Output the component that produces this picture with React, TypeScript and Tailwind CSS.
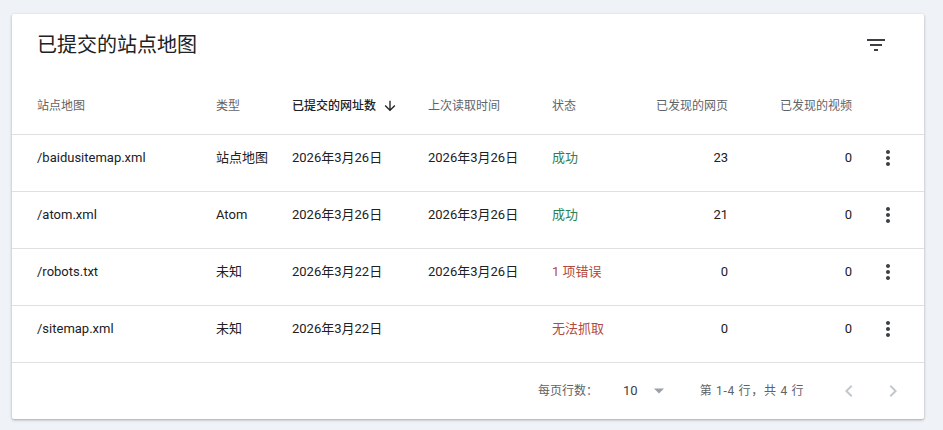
import React from "react";

const font = { fontFamily: 'Roboto, "Noto Sans CJK SC", sans-serif' };

type Row = {
  name: string;
  type: string;
  submitted: string;
  read: string;
  status: string;
  ok: boolean;
  pages: string;
  videos: string;
};

const rows: Row[] = [
  { name: "/baidusitemap.xml", type: "站点地图", submitted: "2026年3月26日", read: "2026年3月26日", status: "成功", ok: true, pages: "23", videos: "0" },
  { name: "/atom.xml", type: "Atom", submitted: "2026年3月26日", read: "2026年3月26日", status: "成功", ok: true, pages: "21", videos: "0" },
  { name: "/robots.txt", type: "未知", submitted: "2026年3月22日", read: "2026年3月26日", status: "1 项错误", ok: false, pages: "0", videos: "0" },
  { name: "/sitemap.xml", type: "未知", submitted: "2026年3月22日", read: "", status: "无法抓取", ok: false, pages: "0", videos: "0" },
];

const cols = "grid grid-cols-[179px_76px_136px_124px_80px_96px_124px_72px] pl-[25px]";

function MoreVert() {
  return (
    <svg width="24" height="24" viewBox="0 0 24 24" fill="#3c4043">
      <path d="M12 8c1.1 0 2-.9 2-2s-.9-2-2-2-2 .9-2 2 .9 2 2 2zm0 2c-1.1 0-2 .9-2 2s.9 2 2 2 2-.9 2-2-.9-2-2-2zm0 6c-1.1 0-2 .9-2 2s.9 2 2 2 2-.9 2-2-.9-2-2-2z" />
    </svg>
  );
}

export default function App() {
  return (
    <div className="w-[943px] h-[430px] bg-[#eff2f6] pt-[14px] pl-[12px]" style={font}>
      <div className="w-[912px] bg-white rounded-[2px] shadow-[0_1px_3px_rgba(60,64,67,0.3),0_1px_2px_rgba(60,64,67,0.15)]">
        <div className="flex items-start justify-between pl-[25px] pr-[36px] pt-[17px] h-[64px]">
          <div className="text-[20px] leading-[28px] text-[#202124]">已提交的站点地图</div>
          <svg className="mt-[2px]" width="24" height="24" viewBox="0 0 24 24" fill="#3c4043">
            <path d="M10 18h4v-2h-4v2zM3 6v2h18V6H3zm3 7h12v-2H6v2z" />
          </svg>
        </div>
        <div className={`${cols} h-[57px] pb-[1px] items-center text-[12px] text-[#5f6368] border-b border-[#e0e0e0]`}>
          <div>站点地图</div>
          <div>类型</div>
          <div className="flex items-center gap-[6px] text-[#202124] font-medium">
            已提交的网址数
            <svg width="16" height="16" viewBox="0 0 24 24" fill="#202124">
              <path d="M20 12l-1.41-1.41L13 16.17V4h-2v12.17l-5.58-5.59L4 12l8 8 8-8z" />
            </svg>
          </div>
          <div>上次读取时间</div>
          <div>状态</div>
          <div className="text-right">已发现的网页</div>
          <div className="text-right">已发现的视频</div>
          <div />
        </div>
        {rows.map((r) => (
          <div key={r.name} className={`${cols} h-[57px] items-start pt-[14px] leading-[18px] text-[13px] text-[#202124] border-b border-[#e0e0e0]`}>
            <div>{r.name}</div>
            <div>{r.type}</div>
            <div>{r.submitted}</div>
            <div>{r.read}</div>
            <div className={r.ok ? "text-[#2e8050]" : "text-[#b24a3c]"}>{r.status}</div>
            <div className="text-right">{r.pages}</div>
            <div className="text-right">{r.videos}</div>
            <div className="flex justify-center -mt-[3px]">
              <MoreVert />
            </div>
          </div>
        ))}
        <div className="flex items-center h-[56px] text-[12px] text-[#5f6368] pl-[526px]">
          <div>每页行数：</div>
          <div className="ml-[25px] text-[13px] text-[#3c4043]">10</div>
          <svg className="ml-[15px]" width="12" height="12" viewBox="0 0 12 12" fill="#9aa0a6">
            <path d="M1 3.5h10L6 8.5z" />
          </svg>
          <div className="ml-[35px] tracking-[0.7px]">第 1-4 行，共 4 行</div>
          <svg className="ml-[33px]" width="24" height="24" viewBox="0 0 24 24" fill="#c4c7cb">
            <path d="M15.41 7.41L14 6l-6 6 6 6 1.41-1.41L10.83 12z" />
          </svg>
          <svg className="ml-[20px]" width="24" height="24" viewBox="0 0 24 24" fill="#c4c7cb">
            <path d="M10 6L8.59 7.41 13.17 12l-4.58 4.59L10 18l6-6z" />
          </svg>
        </div>
      </div>
    </div>
  );
}
